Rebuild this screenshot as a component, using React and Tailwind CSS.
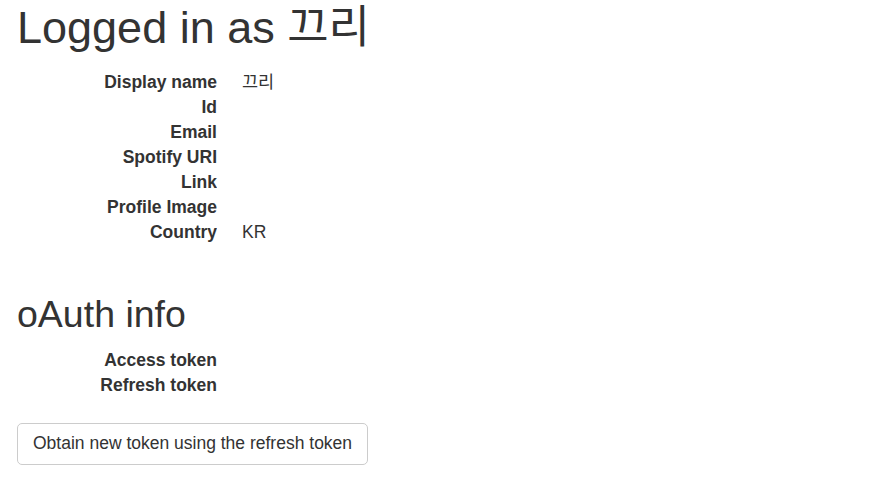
export default function App() {
  const font = { fontFamily: '"Liberation Sans", Arial, "Noto Sans CJK KR", sans-serif' };
  const Row = ({ k, v }) => (
    <div className="flex">
      <dt className="w-[200px] shrink-0 text-right font-bold truncate">{k}</dt>
      <dd className="ml-[25px]">{v}</dd>
    </div>
  );
  return (
    <div className="min-h-[503px] w-[883px] bg-white text-[#333] text-[17.5px] leading-[25px] px-[17px]" style={font}>
      <h1 className="pt-[3px] text-[45px] leading-[49.5px] font-normal">Logged in as 끄리</h1>
      <dl className="mt-[17px]">
        <Row k="Display name" v="끄리" />
        <Row k="Id" v="" />
        <Row k="Email" v="" />
        <Row k="Spotify URI" v="" />
        <Row k="Link" v="" />
        <Row k="Profile Image" v="" />
        <Row k="Country" v="KR" />
      </dl>
      <h2 className="mt-[49px] text-[37.5px] leading-[41.25px] font-normal">oAuth info</h2>
      <dl className="mt-[13px]">
        <Row k="Access token" v="" />
        <Row k="Refresh token" v="" />
      </dl>
      <button className="mt-[25px] h-[42px] whitespace-nowrap border border-[#ccc] rounded-[5px] bg-white text-[#333] text-[17.5px] leading-[25px] px-[15px]" style={font}>
        Obtain new token using the refresh token
      </button>
    </div>
  );
}
